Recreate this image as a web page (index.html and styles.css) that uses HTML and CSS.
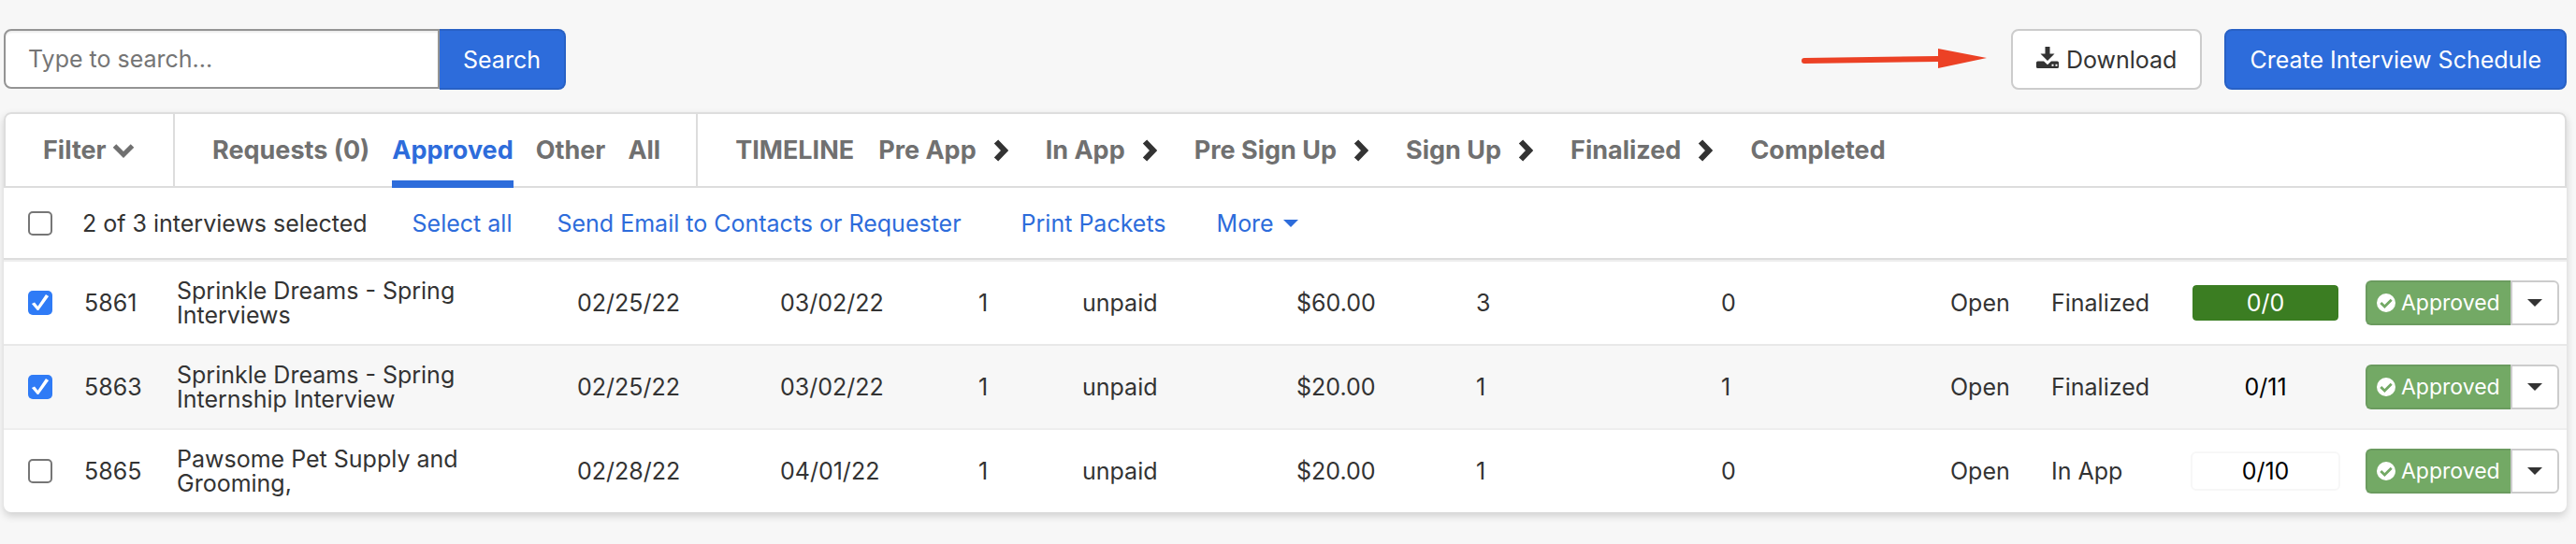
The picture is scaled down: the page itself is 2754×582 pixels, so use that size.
FILE: index.html
```html
<!DOCTYPE html>
<html lang="en">
<head>
<meta charset="utf-8">
<title>Interview Schedules</title>
<link rel="stylesheet" href="styles.css">
</head>
<body>
<svg class="sprite" aria-hidden="true">
  <symbol id="check-circle" viewBox="0 0 20 20"><circle cx="10" cy="10" r="10" fill="currentColor"/><path d="M4.300 9.900L8.400 14L15.700 6.700" fill="none" stroke="#73a965" stroke-width="2.800"/></symbol>
  <symbol id="caret" viewBox="0 0 16 8"><path d="M0 0H16L8 8Z" fill="currentColor"/></symbol>
  <symbol id="chevron" viewBox="0 0 16 24"><path d="M3 2.500L12 12L3 21.500" fill="none" stroke="currentColor" stroke-width="6"/></symbol>
</svg>
<header class="topbar">
  <form class="search">
    <input class="search-input" type="search" placeholder="Type to search..." aria-label="Search interviews">
    <button class="btn btn-primary search-btn" type="button">Search</button>
  </form>
  <div class="actions">
    <svg class="arrow" viewBox="0 0 200 24" aria-hidden="true"><path d="M3 10L146 8V0L198 10L146 21V14L3 16Q0 16 0 13Q0 10 3 10Z" fill="#ec4125"/></svg>
    <button class="btn btn-default" type="button"><svg class="icon-download" viewBox="0 0 24 24" aria-hidden="true"><path d="M9.500 0H14.500V7.500H19.500L12 15L4.500 7.500H9.500Z" fill="currentColor"/><path d="M1.500 15.500H8L12 19.200L16 15.500H22.500Q24 15.500 24 17V21.500Q24 23 22.500 23H1.500Q0 23 0 21.500V17Q0 15.500 1.500 15.500ZM16.500 18.800V20.800H18.500V18.800ZM20.500 18.800V20.800H22.500V18.800Z" fill="currentColor" fill-rule="evenodd"/></svg>Download</button>
    <button class="btn btn-primary" type="button">Create Interview Schedule</button>
  </div>
</header>
<main class="card">
  <nav class="tabs">
    <button class="tab filter" type="button">Filter<svg class="icon-down" viewBox="0 0 24 20" aria-hidden="true"><path d="M2.500 5L12 14.500L21.500 5" fill="none" stroke="currentColor" stroke-width="5"/></svg></button>
    <div class="tab-group">
      <a class="tab" href="#">Requests (0)</a>
      <a class="tab active" href="#">Approved</a>
      <a class="tab" href="#">Other</a>
      <a class="tab" href="#">All</a>
    </div>
    <div class="timeline">
      <span class="tab timeline-title">TIMELINE</span>
      <a class="tab" href="#">Pre App</a><svg class="chevron"><use href="#chevron"/></svg>
      <a class="tab" href="#">In App</a><svg class="chevron"><use href="#chevron"/></svg>
      <a class="tab" href="#">Pre Sign Up</a><svg class="chevron"><use href="#chevron"/></svg>
      <a class="tab" href="#">Sign Up</a><svg class="chevron"><use href="#chevron"/></svg>
      <a class="tab" href="#">Finalized</a><svg class="chevron"><use href="#chevron"/></svg>
      <a class="tab" href="#">Completed</a>
    </div>
  </nav>
  <div class="bulk">
    <label class="bulk-label"><input class="check" type="checkbox"><span>2 of 3 interviews selected</span></label>
    <a href="#">Select all</a>
    <a href="#">Send Email to Contacts or Requester</a>
    <a class="packets" href="#">Print Packets</a>
    <button class="more" type="button">More<svg class="caret"><use href="#caret"/></svg></button>
  </div>
  <table class="rows">
    <colgroup>
      <col class="c-check"><col class="c-id"><col class="c-name"><col class="c-start"><col class="c-end"><col class="c-count"><col class="c-paid"><col class="c-price"><col class="c-rooms"><col class="c-extra"><col class="c-open"><col class="c-stage"><col class="c-ratio"><col class="c-state">
    </colgroup>
    <tbody>
      <tr>
        <td class="pick"><input class="check" type="checkbox" checked aria-label="Select 5861"></td>
        <td>5861</td><td class="name">Sprinkle Dreams - Spring Interviews</td><td>02/25/22</td><td>03/02/22</td><td>1</td><td>unpaid</td><td>$60.00</td><td>3</td><td>0</td><td>Open</td><td>Finalized</td>
        <td><span class="ratio full">0/0</span></td>
        <td><div class="split"><button class="approved" type="button"><svg class="ok"><use href="#check-circle"/></svg>Approved</button><button class="toggle" type="button" aria-label="Change status"><svg class="caret"><use href="#caret"/></svg></button></div></td>
      </tr>
      <tr class="shaded">
        <td class="pick"><input class="check" type="checkbox" checked aria-label="Select 5863"></td>
        <td>5863</td><td class="name">Sprinkle Dreams - Spring Internship Interview</td><td>02/25/22</td><td>03/02/22</td><td>1</td><td>unpaid</td><td>$20.00</td><td>1</td><td>1</td><td>Open</td><td>Finalized</td>
        <td><span class="ratio">0/11</span></td>
        <td><div class="split"><button class="approved" type="button"><svg class="ok"><use href="#check-circle"/></svg>Approved</button><button class="toggle" type="button" aria-label="Change status"><svg class="caret"><use href="#caret"/></svg></button></div></td>
      </tr>
      <tr>
        <td class="pick"><input class="check" type="checkbox" aria-label="Select 5865"></td>
        <td>5865</td><td class="name">Pawsome Pet Supply and Grooming,</td><td>02/28/22</td><td>04/01/22</td><td>1</td><td>unpaid</td><td>$20.00</td><td>1</td><td>0</td><td>Open</td><td>In App</td>
        <td><span class="ratio">0/10</span></td>
        <td><div class="split"><button class="approved" type="button"><svg class="ok"><use href="#check-circle"/></svg>Approved</button><button class="toggle" type="button" aria-label="Change status"><svg class="caret"><use href="#caret"/></svg></button></div></td>
      </tr>
    </tbody>
  </table>
</main>
</body>
</html>
```
FILE: styles.css
```css
* { box-sizing: border-box; }
body {
  margin: 0;
  padding: 31px 10px 32px 4px;
  background: #f7f7f7;
  color: #333;
  font: 25px/26px Inter, "Liberation Sans", sans-serif;
}
button, input { font: inherit; }
button { cursor: pointer; }
a { color: #2d6cdb; text-decoration: none; }
.sprite { display: none; }

.topbar { display: flex; justify-content: space-between; margin-bottom: 24px; }
.search { display: flex; }
.search-input {
  width: 466px;
  height: 64px;
  padding: 0 24px;
  border: 2px solid #949494;
  border-radius: 8px 0 0 8px;
  background: #fff;
  box-shadow: inset 0 2px 2px rgba(0, 0, 0, .07);
  appearance: none;
}
.search-input::placeholder { color: #757575; opacity: 1; }
.btn { height: 65px; padding: 0 25px; border: 2px solid; border-radius: 8px; white-space: nowrap; }
.btn-primary { background: #2d6cdb; border-color: #2861c5; color: #fff; }
.btn-default { display: flex; align-items: center; gap: 8px; background: #fff; border-color: #ccc; color: #333; }
.search-btn { border-radius: 0 8px 8px 0; border-left: 0; }
.actions { display: flex; align-items: center; gap: 24px; }
.arrow { width: 200px; height: 24px; }
.icon-download { width: 24px; height: 24px; margin-bottom: 4px; }

.card { border-radius: 8px; background: #fff; box-shadow: 0 4px 8px rgba(0, 0, 0, .16); }
.tabs {
  display: flex;
  height: 81px;
  border: 2px solid #ddd;
  border-radius: 8px 8px 0 0;
  font-size: 27px;
  font-weight: 700;
}
.tab { display: flex; align-items: center; color: #707070; white-space: nowrap; }
.filter { width: 179px; padding: 0 0 0 40px; gap: 6px; border: 0; background: none; font-weight: 700; }
.icon-down { width: 24px; height: 20px; }
.tab-group { display: flex; gap: 24px; padding: 0 38px 0 40px; border: solid #ddd; border-width: 0 2px; }
.active { margin-bottom: -2px; border-bottom: 8px solid #2d6cdb; border-top: 6px solid transparent; color: #2d6cdb; }
.timeline { display: flex; align-items: center; padding-left: 40px; }
.timeline-title { margin-right: 26px; }
.chevron { width: 16px; height: 24px; margin: 0 40px 0 18px; color: #333; }

.bulk { display: flex; align-items: center; gap: 48px; height: 75px; padding-left: 26px; white-space: nowrap; }
.bulk-label { display: flex; align-items: center; gap: 32px; }
.packets { padding: 0 6px 0 16px; }
.more { display: flex; align-items: center; gap: 10px; padding: 0; border: 0; background: none; color: #2d6cdb; }
.caret { width: 16px; height: 8px; }

.check {
  display: block;
  width: 26px;
  height: 26px;
  margin: 0;
  border: 2px solid #767676;
  border-radius: 5px;
  background: #fff;
  appearance: none;
}
.check:checked { border: 0; background: #2f7bf6; }
.check:checked::after {
  content: "";
  display: block;
  width: 26px;
  height: 26px;
  background: #fff;
  clip-path: polygon(15% 54%, 27% 48%, 40% 64%, 73% 15%, 85% 23%, 43% 81%, 38% 81%);
}

.rows { width: 100%; table-layout: fixed; border-collapse: separate; border-spacing: 0; border-top: 2px solid #ddd; }
.rows td { height: 90px; padding: 0; border-top: 2px solid #eee; }
.rows .shaded td { background: #f7f7f7; border-top-color: #e8e8e8; }
.rows .pick { padding-left: 26px; }
.rows .name { padding-right: 90px; }
.c-check { width: 86px; }
.c-id { width: 99px; }
.c-start { width: 217px; }
.c-end { width: 212px; }
.c-count { width: 111px; }
.c-paid { width: 229px; }
.c-price { width: 192px; }
.c-rooms { width: 262px; }
.c-extra { width: 245px; }
.c-open { width: 108px; }
.c-stage { width: 149px; }
.c-ratio { width: 187px; }
.c-state { width: 215px; }
.ratio {
  display: block;
  width: 160px;
  padding: 6px 0;
  border: 2px solid #f7f7f7;
  border-radius: 6px;
  color: #000;
  text-align: center;
}
.full { border-color: #fff; background: #3b7d22; background-clip: padding-box; color: #fff; }
.split { display: flex; height: 48px; }
.approved {
  display: flex;
  align-items: center;
  gap: 6px;
  width: 155px;
  padding: 0 0 0 10px;
  border: 2px solid #6b9b5f;
  border-right: 0;
  border-radius: 6px 0 0 6px;
  background: #73a965;
  color: #fff;
  font-size: 23px;
}
.ok { width: 20px; height: 20px; flex: none; }
.toggle {
  display: flex;
  align-items: center;
  justify-content: center;
  width: 52px;
  padding: 0;
  border: 2px solid #ccc;
  border-radius: 0 6px 6px 0;
  background: #fff;
  color: #333;
}
```
